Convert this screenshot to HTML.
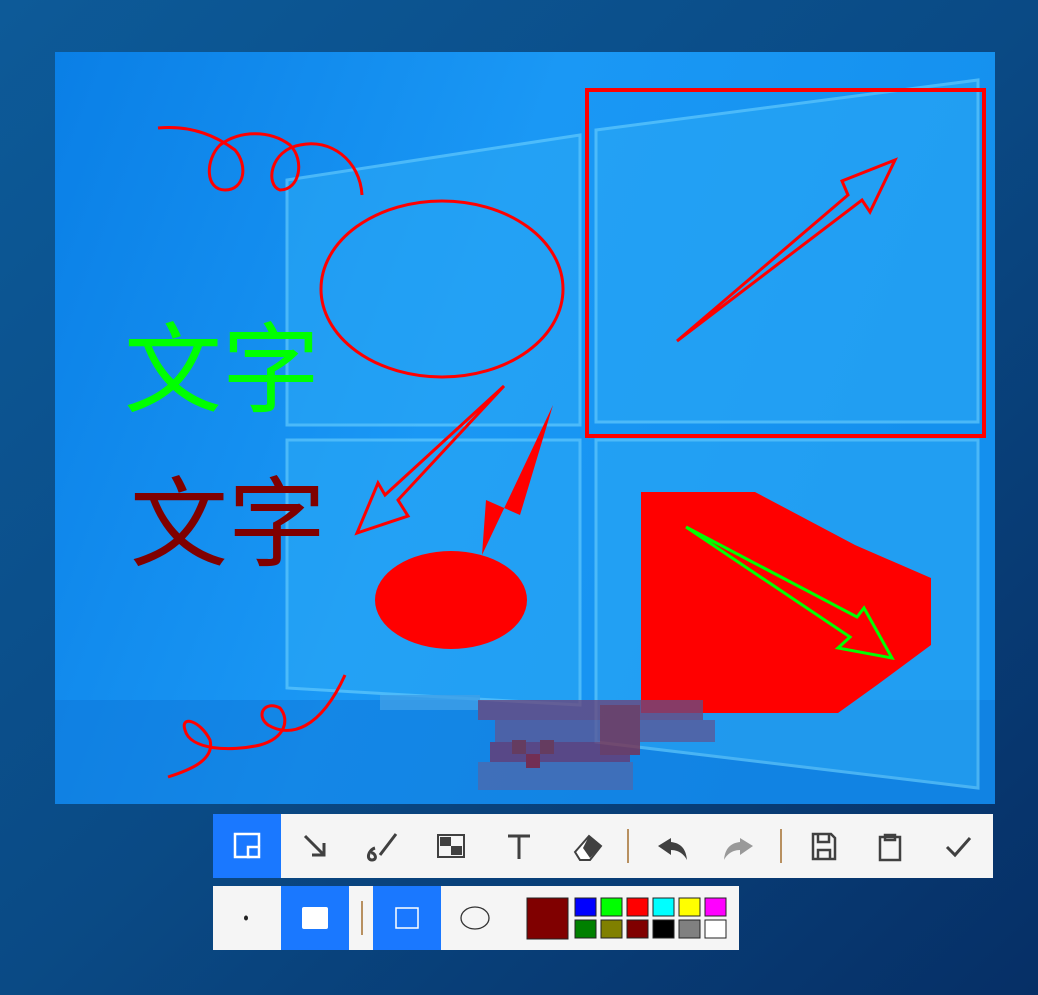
<!DOCTYPE html>
<html><head><meta charset="utf-8"><style>
html,body{margin:0;padding:0;width:1038px;height:995px;overflow:hidden;background:#0a4680}
svg{display:block}
</style></head><body>
<svg width="1038" height="995" viewBox="0 0 1038 995" xmlns="http://www.w3.org/2000/svg">
<defs>
<linearGradient id="bg" x1="0" y1="0" x2="1" y2="1"><stop offset="0" stop-color="#0d5a98"/><stop offset="0.5" stop-color="#0a4a85"/><stop offset="1" stop-color="#062f66"/></linearGradient>
<linearGradient id="img" x1="0" y1="0" x2="1" y2="0.3"><stop offset="0" stop-color="#0a7fe6"/><stop offset="0.5" stop-color="#1a98f5"/><stop offset="1" stop-color="#1490ee"/></linearGradient>
</defs>
<rect width="1038" height="995" fill="url(#bg)"/>
<rect x="55" y="52" width="940" height="752" fill="url(#img)"/>
<rect x="55" y="700" width="940" height="104" fill="#0d76d8" opacity="0.5"/>
<g fill="#2aa8f5" stroke="#6fd4ff" stroke-width="3" opacity="0.6">
<polygon points="287,180 580,135 580,425 287,425"/>
<polygon points="596,130 978,80 978,422 596,422"/>
<polygon points="287,440 580,440 580,705 287,688"/>
<polygon points="596,440 978,440 978,788 596,742"/>
</g>
<path d="M158,128 C190,125 215,135 235,150 C248,165 245,190 225,190 C205,190 205,160 220,145 C240,130 270,130 290,145 C305,160 300,190 280,190 C265,185 270,150 300,145 C330,138 360,160 362,195" fill="none" stroke="#f00" stroke-width="3"/>
<ellipse cx="442" cy="289" rx="121" ry="88" fill="none" stroke="#f00" stroke-width="3"/>
<rect x="587" y="90" width="397" height="346" fill="none" stroke="#f00" stroke-width="4"/>
<polygon points="677,341 848,195 842,181 895,160 870,212 862,200" fill="none" stroke="#f00" stroke-width="3"/>
<polygon points="504,386 398,500 408,516 357,533 378,483 385,495" fill="none" stroke="#f00" stroke-width="3"/>
<polygon points="553,405 482,555 486,500 520,515" fill="#f00"/>
<ellipse cx="451" cy="600" rx="76" ry="49" fill="#f00"/>
<polygon points="641,492 755,492 855,545 931,578 931,645 877,685 838,713 641,713" fill="#f00"/>
<polygon points="686,527 857,617 864,608 892,658 838,648 850,637" fill="none" stroke="#0f0" stroke-width="3"/>
<path d="M168,777 C190,770 215,760 210,740 C200,720 180,715 185,730 C190,750 230,752 260,745 C285,738 290,720 280,708 C265,700 255,715 268,725 C290,738 320,730 345,675" fill="none" stroke="#f00" stroke-width="3"/>
<text x="124" y="404" font-family="Liberation Sans,'Noto Sans CJK SC',sans-serif" font-size="98" fill="#0f0">文字</text>
<text x="130" y="558" font-family="Liberation Sans,'Noto Sans CJK SC',sans-serif" font-size="98" fill="#800000">文字</text>
<g opacity="0.8">
<rect x="380" y="695" width="100" height="15" fill="#3fa0e8"/>
<rect x="478" y="700" width="225" height="20" fill="#6a4a80"/>
<rect x="495" y="720" width="220" height="22" fill="#5a5a9a"/>
<rect x="490" y="742" width="140" height="20" fill="#6a3a70"/>
<rect x="478" y="762" width="155" height="28" fill="#4a6ab0"/>
<rect x="512" y="740" width="14" height="14" fill="#7a2a40"/>
<rect x="540" y="740" width="14" height="14" fill="#7a2a40"/>
<rect x="526" y="754" width="14" height="14" fill="#8a1a30"/>
<rect x="600" y="705" width="40" height="50" fill="#7a3050"/>
</g>
<rect x="213" y="814" width="780" height="64" fill="#f5f5f5"/>
<rect x="213" y="814" width="68" height="64" fill="#1a78ff"/>
<g fill="none" stroke="#fff" stroke-width="2.5"><path d="M250,857 H235 V834 H259 V846"/><rect x="248" y="847" width="11" height="10"/></g>
<g fill="none" stroke="#404040" stroke-width="3">
<path d="M305,836 L324,855 M324,843 V855 H312"/>
<path d="M396,834 L380,855 M375,848 C368,850 366,860 372,860 C378,860 375,852 371,853"/>
<rect x="438" y="835" width="26" height="22" stroke-width="2"/>
<path d="M508,836 H530 M519,836 V859"/>
<path d="M813,834 H831 L835,838 V859 H813 Z M818,834 V842 H829 V834 M818,859 V850 H830 V859" stroke-width="2.5"/>
<path d="M880,837 H900 V860 H880 Z M885,835 H895 V840 H885 Z" stroke-width="2.5"/>
<path d="M947,847 L955,855 L970,838"/>
</g>
<path d="M575,852 L589,836 L601,846 L590,860 L580,860 Z" fill="#fff" stroke="#404040" stroke-width="2"/>
<path d="M583,848 L589,836 L601,846 L590,858 Z" fill="#404040"/>
<rect x="440" y="837" width="11" height="9" fill="#404040"/><rect x="451" y="846" width="11" height="9" fill="#404040"/>
<path d="M671,838 L658,846 L671,855 V850 C680,850 685,856 687,860 C686,848 680,843 671,842 Z" fill="#404040"/>
<path d="M740,838 L753,846 L740,855 V850 C731,850 726,856 724,860 C725,848 731,843 740,842 Z" fill="#999"/>
<rect x="627" y="829" width="2" height="34" fill="#b89060"/>
<rect x="780" y="829" width="2" height="34" fill="#b89060"/>
<rect x="213" y="886" width="526" height="64" fill="#f5f5f5"/>
<rect x="281" y="886" width="68" height="64" fill="#1a78ff"/>
<rect x="373" y="886" width="68" height="64" fill="#1a78ff"/>
<ellipse cx="246" cy="918" rx="2" ry="2.5" fill="#222"/>
<rect x="302" y="907" width="26" height="22" rx="2" fill="#fff"/>
<rect x="361" y="901" width="2" height="34" fill="#b89060"/>
<rect x="396" y="908" width="22" height="20" fill="none" stroke="#fff" stroke-width="1.5"/>
<ellipse cx="475" cy="918" rx="14" ry="11" fill="none" stroke="#333" stroke-width="1.3"/>
<rect x="527" y="898" width="41" height="41" fill="#800000" stroke="#222"/>
<g stroke="#222" stroke-width="1">
<rect x="575" y="898" width="21" height="18" fill="#00f"/><rect x="601" y="898" width="21" height="18" fill="#0f0"/><rect x="627" y="898" width="21" height="18" fill="#f00"/><rect x="653" y="898" width="21" height="18" fill="#0ff"/><rect x="679" y="898" width="21" height="18" fill="#ff0"/><rect x="705" y="898" width="21" height="18" fill="#f0f"/>
<rect x="575" y="920" width="21" height="18" fill="#008000"/><rect x="601" y="920" width="21" height="18" fill="#808000"/><rect x="627" y="920" width="21" height="18" fill="#800000"/><rect x="653" y="920" width="21" height="18" fill="#000"/><rect x="679" y="920" width="21" height="18" fill="#808080"/><rect x="705" y="920" width="21" height="18" fill="#fff"/>
</g>
</svg>
</body></html>
